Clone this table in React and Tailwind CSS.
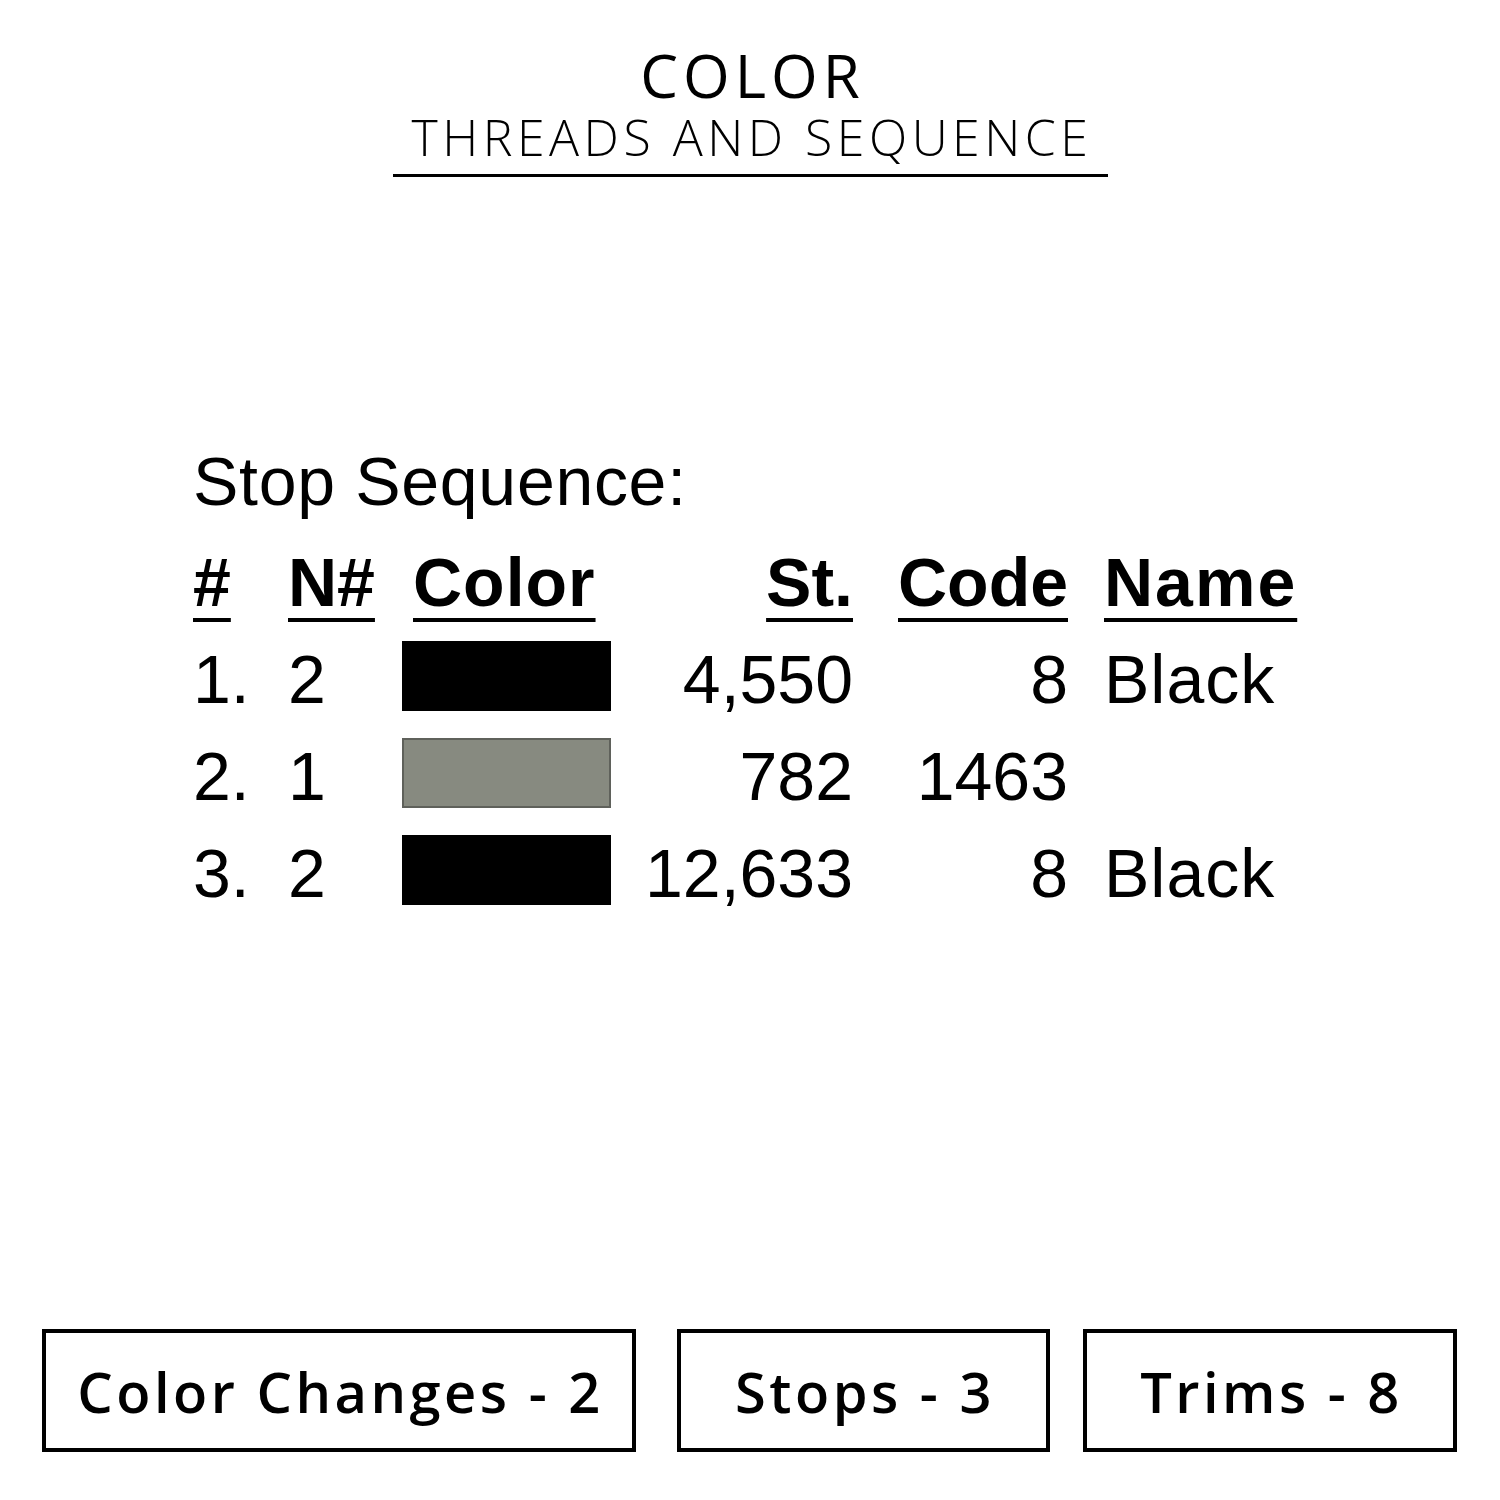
import React from 'react';

const rows = [
  { n: '1.', needle: '2', color: 'bg-black border-black', st: '4,550', code: '8', name: 'Black' },
  { n: '2.', needle: '1', color: 'bg-[#878a80] border-[#5f615b]', st: '782', code: '1463', name: '' },
  { n: '3.', needle: '2', color: 'bg-black border-black', st: '12,633', code: '8', name: 'Black' },
];

const stats = [
  { label: 'Color Changes - 2', width: 'w-[594px]' },
  { label: 'Stops - 3', width: 'w-[373px]' },
  { label: 'Trims - 8', width: 'w-[374px]' },
];

const Header = () => (
  <div className="flex flex-col items-center pt-[45px] font-['Open_Sans',sans-serif] text-black">
    <div className="pl-[5px] text-[60px] leading-[60px] font-medium tracking-[5px]">COLOR</div>
    <div className="mt-[7px] pl-[4px] text-[50px] leading-[50px] font-light tracking-[4.5px]">THREADS AND SEQUENCE</div>
    <div className="mt-[12px] h-[3px] w-[715px] bg-black" />
  </div>
);

const StopTable = () => (
  <div className="ml-[193px] mt-[256px] font-['Liberation_Sans',Arial,sans-serif] text-[68px] leading-[97px] text-black">
    <div className="mb-1 tracking-[0.7px]">Stop Sequence:</div>
    {/* column headers */}
    <div className="flex font-bold underline decoration-[4px] underline-offset-[12px]">
      <div className="w-[95px]">#</div>
      <div className="w-[114px]">N#</div>
      <div className="w-[230px] pl-[11px] tracking-[1px]">Color</div>
      <div className="w-[221px] text-right">St.</div>
      <div className="w-[215px] text-right">Code</div>
      <div className="pl-[36px] tracking-[2px]">Name</div>
    </div>
    {rows.map((r, i) => (
      <div key={i} className="flex items-center">
        <div className="w-[95px]">{r.n}</div>
        <div className="w-[114px]">{r.needle}</div>
        <div className="w-[230px]">
          <div className={`mb-[8px] h-[70px] w-[209px] border-2 ${r.color}`} />
        </div>
        <div className="w-[221px] text-right">{r.st}</div>
        <div className="w-[215px] text-right">{r.code}</div>
        <div className="pl-[36px] tracking-[1px]">{r.name}</div>
      </div>
    ))}
  </div>
);

const StatBoxes = () => (
  <div className="mt-auto flex pb-[48px] pl-[42px] font-['Open_Sans',sans-serif]">
    {stats.map((s, i) => (
      <div
        key={s.label}
        className={`${s.width} ${i === 0 ? '' : i === 1 ? 'ml-[41px]' : 'ml-[33px]'} flex h-[123px] items-center justify-center border-4 border-black pl-[3px] text-[56px] font-semibold tracking-[3.5px] text-black`}
      >
        {s.label}
      </div>
    ))}
  </div>
);

export default function App() {
  return (
    <div className="flex h-[1500px] w-[1500px] flex-col bg-white">
      <Header />
      <StopTable />
      <StatBoxes />
    </div>
  );
}
